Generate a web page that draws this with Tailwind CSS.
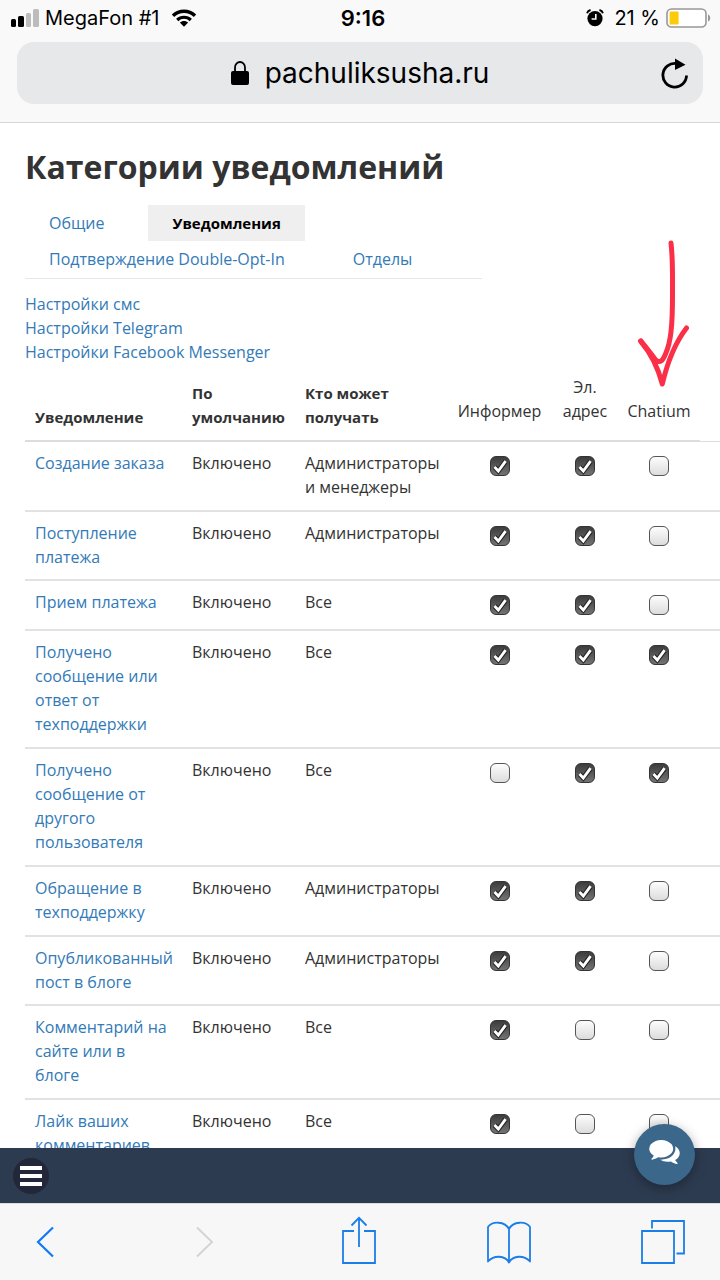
<!doctype html>
<html lang="ru">
    <head>
        <meta charset="UTF-8" />
        <meta name="viewport" content="width=device-width, initial-scale=1.0" />
        <script src="https://cdn.jsdelivr.net/npm/@tailwindcss/browser@4"></script>
        <title>Категории уведомлений</title>
    </head>
    <body class="flex h-screen flex-col overflow-hidden bg-white font-['Open_Sans',sans-serif] text-[16px] leading-6 text-[#333]">

    <!-- Browser header -->
    <header class="shrink-0 border-b border-[#d5d6d8] bg-[#f9f9fa] px-[17px] pb-[18px] font-['Inter',sans-serif] text-black">
        <div class="-mx-[6px] grid h-9 grid-cols-[1fr_auto_1fr] items-center text-[20px]">
            <div class="flex items-center gap-[6px]">
                <svg class="h-[18px] w-7" viewBox="0 0 28 18">
                    <rect x="0" y="10" width="5" height="8" rx="1.5" />
                    <rect x="7" y="7" width="6" height="11" rx="1.5" />
                    <rect x="15" y="4" width="5" height="14" rx="1.5" fill="#bcbcbd" />
                    <rect x="22" y="0" width="6" height="18" rx="1.5" fill="#bcbcbd" />
                </svg>
                <span>MegaFon #1</span>
                <svg class="ml-[6px] h-[18px] w-[26px]" viewBox="0 0 26 18">
                    <path d="M2 6.800C8.200.700 17.800.700 24 6.800" fill="none" stroke="#000" stroke-width="3.400" />
                    <path d="M6.200 11C10 7.300 16 7.300 19.800 11" fill="none" stroke="#000" stroke-width="3.200" />
                    <path d="M8.800 13.600c2.400-2.300 6-2.300 8.400 0L13 17.800z" />
                </svg>
            </div>
            <span class="pl-[6px] text-[22px] font-semibold">9:16</span>
            <div class="flex items-center justify-end">
                <svg class="mr-[10px] h-[18px] w-[18px]" viewBox="0 0 18 18">
                    <circle cx="9" cy="9.600" r="7.600" />
                    <path d="M1 4.200Q1.800 1.600 4.600 1M17 4.200Q16.200 1.600 13.400 1" fill="none" stroke="#000" stroke-width="1.800" />
                    <path d="M9.800 5v5H5.600" fill="none" stroke="#f9f9fa" stroke-width="1.600" />
                </svg>
                <span class="mr-[6px]">21 %</span>
                <svg class="-mr-[2px] h-5 w-[45px]" viewBox="0 0 45 20">
                    <rect x="1" y="1" width="39" height="18" rx="4.500" fill="#fff" stroke="#98989c" stroke-width="1.600" />
                    <rect x="3.600" y="3.600" width="9" height="13" rx="1.200" fill="#fdcb0a" />
                    <path d="M42 6.500c3 1 3 6 0 7z" fill="#98989c" />
                </svg>
            </div>
        </div>
        <div class="mt-[6px] grid h-[62px] grid-cols-[1fr_auto_1fr] items-center rounded-[17px] bg-[#e6e8ea] px-[14px]">
            <span></span>
            <div class="flex items-center gap-4 text-[28px]">
                <svg class="h-6 w-[18px]" viewBox="0 0 18 24">
                    <path d="M4 11V6.500a5 5.500 0 0 1 10 0V11" fill="none" stroke="#000" stroke-width="1.800" />
                    <rect y="10" width="18" height="14" rx="2" />
                </svg>
                <span>pachuliksusha.ru</span>
            </div>
            <button type="button" aria-label="Обновить" class="justify-self-end">
                <svg class="h-[31px] w-7" viewBox="0 0 28 31">
                    <path d="M15.500 5.600A11.800 11.800 0 1 0 25.500 17.500" fill="none" stroke="#000" stroke-width="2.800" />
                    <path d="M14 .500 24.500 6.800 14 12z" />
                </svg>
            </button>
        </div>
    </header>

    <!-- Page -->
    <main class="min-h-0 flex-1 overflow-hidden pl-[25px]">
        <h1 class="pt-6 text-[32px] leading-10 font-bold">Категории уведомлений</h1>

        <nav class="mt-[18px] flex max-w-[457px] flex-wrap gap-x-5 border-b border-[#e8e8e8] pb-[1px] leading-9 text-[#337ab7]">
            <a href="#" class="px-6">Общие</a>
            <a href="#" class="bg-[#efefef] px-6 text-[15px] font-bold text-black">Уведомления</a>
            <a href="#" class="px-6">Подтверждение Double-Opt-In</a>
            <a href="#" class="px-6">Отделы</a>
        </nav>

        <div class="mt-[13px] mb-[7px] flex flex-col items-start text-[#337ab7]">
            <a href="#">Настройки смс</a>
            <a href="#">Настройки Telegram</a>
            <a href="#">Настройки Facebook Messenger</a>
        </div>

        <table class="w-full table-fixed border-separate border-spacing-0 text-left">
            <colgroup>
                <col class="w-[157px]" />
                <col class="w-[113px]" />
                <col class="w-[152px]" />
                <col class="w-[105px]" />
                <col class="w-[66px]" />
                <col class="w-[82px]" />
                <col />
            </colgroup>
            <thead>
                <tr class="align-bottom text-[15px]">
                    <th class="border-b-2 border-[#ddd] px-[10px] pt-[10px] pb-[11px]">Уведомление</th>
                    <th class="border-b-2 border-[#ddd] px-[10px] pt-[10px] pb-[11px]">По умолчанию</th>
                    <th class="border-b-2 border-[#ddd] px-[10px] pt-[10px] pb-[11px]">Кто может получать</th>
                    <th class="border-b-2 border-[#ddd] pb-[17px] text-center text-[16px] font-normal">Информер</th>
                    <th class="border-b-2 border-[#ddd] pb-[17px] text-center text-[16px] font-normal">Эл.<br />адрес</th>
                    <th class="relative border-b-2 border-[#ddd] pb-[17px] text-center text-[16px] font-normal">
                        Chatium
                        <svg class="pointer-events-none absolute bottom-[52px] left-[18px] h-[148px] w-14" viewBox="0 0 56 148" fill="none" stroke="#fb3048" stroke-width="5" stroke-linecap="round" stroke-linejoin="round">
                            <path d="M35 3C37 20 36.500 35 36.500 55 36.500 85 35 102 29.500 114 26.500 121 24.500 123.500 19 120L4.500 101C14 112 21.500 126 26.300 144 31 124 39 103 50.500 88" />
                            <path d="M5 101C12 110 17 116 21 122" />
                        </svg>
                    </th>
                    <th class="border-b border-[#ddd]"></th>
                </tr>
            </thead>
            <tbody id="rows"></tbody>
        </table>
    </main>

    <!-- Site bar -->
    <div class="relative flex h-[55px] shrink-0 items-center bg-[#2d3b51] px-[13px]">
        <button type="button" aria-label="Меню" class="flex size-9 flex-col items-center justify-center gap-1 rounded-full bg-[#23273a]">
            <span class="h-1 w-[22px] bg-white"></span>
            <span class="h-1 w-[22px] bg-white"></span>
            <span class="h-1 w-[22px] bg-white"></span>
        </button>
        <button type="button" aria-label="Чат" class="absolute right-[25px] bottom-[18px] flex size-[61px] items-center justify-center rounded-full bg-[#3b678a] pb-[5px] shadow-[0_3px_12px_rgba(0,0,0,0.35)]">
            <svg class="h-6 w-[31px]" viewBox="0 256 1792 1408" fill="#fff">
                <path d="M1408 768q0 139-94 257t-256.500 186.500-353.500 68.500q-86 0-176-16-124 88-278 128-36 9-86 16h-3q-11 0-20.500-8t-11.500-21q-1-3-1-6.500t.5-6.500 2-6l2.500-5 3.500-5.500 4-5 4.500-5 4-4.500q5-6 23-25t26-29.500 22.500-29 25-38.500 20.500-44q-124-72-195-177t-71-224q0-139 94-257t256.500-186.500 353.500-68.500 353.500 68.500 256.500 186.500 94 257zm384 256q0 120-71 224.500t-195 176.500q10 24 20.500 44t25 38.500 22.500 29 26 29.500 23 25q1 1 4 4.500t4.500 5 4 5 3.500 5.500l2.500 5 2 6 .5 6.500-1 6.500q-3 14-13 22t-22 7q-50-7-86-16-154-40-278-128-90 16-176 16-271 0-472-132 58 4 88 4 161 0 309-45t264-129q125-92 192-212t67-254q0-77-23-152 129 71 204 178t75 230z" />
            </svg>
        </button>
    </div>

    <!-- Browser toolbar -->
    <footer class="flex h-[77px] shrink-0 items-center justify-between border-t border-[#dcdcde] bg-[#f7f7f8] pr-[35px] pl-5">
        <button type="button" aria-label="Назад" class="flex w-[50px] justify-center">
            <svg class="h-8 w-[18px]" viewBox="0 0 18 32" fill="none" stroke="#0f7af5" stroke-width="2.200"><path d="M17 1.500 2 16 17 30.500" /></svg>
        </button>
        <button type="button" aria-label="Вперёд" class="flex w-[50px] justify-center">
            <svg class="h-8 w-[18px]" viewBox="0 0 18 32" fill="none" stroke="#d3d4d6" stroke-width="2"><path d="M1 1.500 16 16 1 30.500" /></svg>
        </button>
        <button type="button" aria-label="Поделиться" class="flex w-9 justify-center pb-1">
            <svg class="h-12 w-[34px]" viewBox="0 0 34 48" fill="none" stroke="#1b7de6" stroke-width="1.800">
                <path d="M12 15H1v32h32V15H22M17 31V2M9.500 9.500 17 1.800l7.500 7.700" />
            </svg>
        </button>
        <button type="button" aria-label="Закладки" class="flex w-11 justify-center">
            <svg class="h-[43px] w-11" viewBox="0 0 44 43" fill="none" stroke="#1b7de6" stroke-width="1.800" stroke-linejoin="round">
                <path d="M22 8C18 0 5 0 1 6v34.500C7 34 18 34 22 41.500 26 34 37 34 43 40.500V6C39 0 26 0 22 8zv33.500" />
            </svg>
        </button>
        <button type="button" aria-label="Вкладки" class="flex w-11 justify-center">
            <svg class="h-11 w-11" viewBox="0 0 44 44" fill="none" stroke="#1b7de6" stroke-width="1.800">
                <path d="M1 11h32v32H1zM11 8.500V1h32v32.500h-7.500" />
            </svg>
        </button>
    </footer>

    <script>
        // name, recipients, row height, [informer, email, chatium]
        const rows = [
            ['Создание заказа', 'Администраторы и менеджеры', 'h-[70px]', [1, 1, 0]],
            ['Поступление платежа', 'Администраторы', 'h-[69px]', [1, 1, 0]],
            ['Прием платежа', 'Все', 'h-[50px]', [1, 1, 0]],
            ['Получено сообщение или ответ от техподдержки', 'Все', 'h-[118px]', [1, 1, 1]],
            ['Получено сообщение от другого пользователя', 'Все', 'h-[118px]', [0, 1, 1]],
            ['Обращение в техподдержку', 'Администраторы', 'h-[70px]', [1, 1, 0]],
            ['Опубликованный пост в блоге', 'Администраторы', 'h-[69px]', [1, 1, 0]],
            ['Комментарий на сайте или в блоге', 'Все', 'h-[94px]', [1, 0, 0]],
            ['Лайк ваших комментариев', 'Все', 'h-[70px]', [1, 0, 0]],
        ];
        const channels = ['Информер', 'Эл. адрес', 'Chatium'];

        const checkbox = (name, channel, on) => `
            <td class="border-b-2 border-[#e2e2e2] pt-[14px]">
                <label class="mx-auto grid size-5 place-items-center">
                    <input type="checkbox" aria-label="${name}: ${channel}" ${on ? 'checked' : ''}
                        class="peer col-start-1 row-start-1 size-5 appearance-none rounded-[6px] border border-[#555] bg-linear-to-b from-[#fdfdfd] to-[#dcdcdc] checked:border-[#333] checked:from-[#3c3c3c] checked:to-[#747474]" />
                    <svg class="pointer-events-none col-start-1 row-start-1 hidden size-5 peer-checked:block" viewBox="0 0 20 20" fill="none">
                        <path d="M4.500 11 8.300 15 15.600 5.200" stroke="#222" stroke-width="5" />
                        <path d="M4.500 11 8.300 15 15.600 5.200" stroke="#fff" stroke-width="2.800" />
                    </svg>
                </label>
            </td>`;

        document.getElementById('rows').innerHTML = rows.map(([name, who, height, marks]) => `
            <tr class="${height} align-top">
                <td class="border-b-2 border-[#e2e2e2] px-[10px] pt-[9px]"><a href="#" class="text-[#337ab7]">${name}</a></td>
                <td class="border-b-2 border-[#e2e2e2] px-[10px] pt-[9px]">Включено</td>
                <td class="border-b-2 border-[#e2e2e2] px-[10px] pt-[9px]">${who}</td>
                ${marks.map((on, i) => checkbox(name, channels[i], on)).join('')}
                <td class="border-b-2 border-[#e2e2e2]"></td>
            </tr>`).join('');
    </script>
    </body>
</html>
